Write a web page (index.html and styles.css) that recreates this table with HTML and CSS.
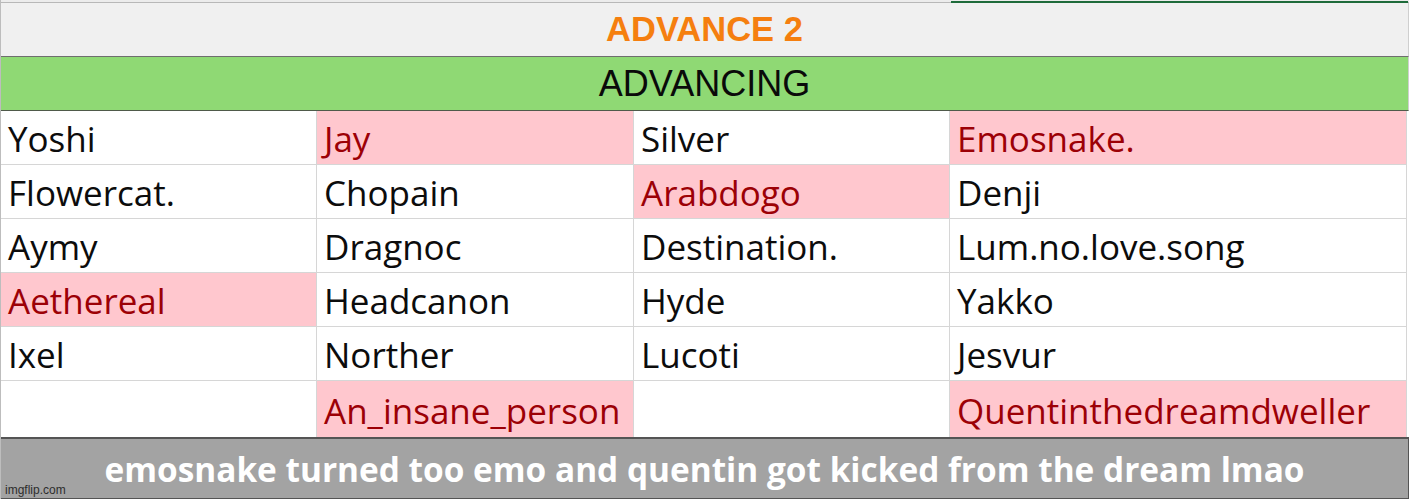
FILE: index.html
```html
<!DOCTYPE html>
<html>
<head>
<meta charset="utf-8">
<link rel="stylesheet" href="styles.css">
</head>
<body>
<div class="sheet">
  <div class="topstrip"><span class="sel"></span></div>
  <div class="title">ADVANCE 2</div>
  <div class="banner">ADVANCING</div>
  <div class="grid">
    <div class="cell">Yoshi</div>
    <div class="cell bad">Jay</div>
    <div class="cell">Silver</div>
    <div class="cell bad">Emosnake.</div>

    <div class="cell">Flowercat.</div>
    <div class="cell">Chopain</div>
    <div class="cell bad">Arabdogo</div>
    <div class="cell">Denji</div>

    <div class="cell">Aymy</div>
    <div class="cell">Dragnoc</div>
    <div class="cell">Destination.</div>
    <div class="cell">Lum.no.love.song</div>

    <div class="cell bad">Aethereal</div>
    <div class="cell">Headcanon</div>
    <div class="cell">Hyde</div>
    <div class="cell">Yakko</div>

    <div class="cell">Ixel</div>
    <div class="cell">Norther</div>
    <div class="cell">Lucoti</div>
    <div class="cell">Jesvur</div>

    <div class="cell tall"></div>
    <div class="cell tall bad">An_insane_person</div>
    <div class="cell tall"></div>
    <div class="cell tall bad">Quentinthedreamdweller</div>
  </div>
  <div class="caption">
    emosnake turned too emo and quentin got kicked from the dream lmao
    <span class="watermark">imgflip.com</span>
  </div>
</div>
</body>
</html>
```
FILE: styles.css
```css
html, body {
  margin: 0;
  padding: 0;
  background: #ffffff;
}
.sheet {
  width: 1409px;
  height: 499px;
  overflow: hidden;
  display: flex;
  flex-direction: column;
  border-left: 1px solid #bdbdbd;
  box-sizing: border-box;
}
.topstrip {
  height: 2px;
  background: #ececec;
  border-bottom: 1px solid #b8b8b8;
  position: relative;
}
.topstrip .sel {
  position: absolute;
  left: 950px;
  right: 1px;
  top: 1px;
  height: 2px;
  background: #1e6b3a;
}
.title {
  height: 53px;
  background: #f0f0f0;
  border-bottom: 1px solid #6e6e6e;
  display: flex;
  align-items: center;
  justify-content: center;
  font-family: "Liberation Sans", Arial, sans-serif;
  font-weight: bold;
  font-size: 34.5px;
  color: #f57f0f;
  border-right: 1px solid #cfcfcf;
}
.banner {
  height: 53px;
  background: #8fd974;
  border-bottom: 1px solid #4f5a4a;
  display: flex;
  align-items: center;
  justify-content: center;
  font-family: "Liberation Sans", Arial, sans-serif;
  font-size: 36px;
  color: #0a0a0a;
  border-right: 1px solid #cfcfcf;
}
.grid {
  display: grid;
  grid-template-columns: 316px 317px 316px 457px;
  grid-template-rows: repeat(5, 54px) 56px;
}
.cell {
  box-sizing: border-box;
  border-right: 1px solid #d6d6d6;
  border-bottom: 1px solid #d6d6d6;
  padding-left: 7px;
  padding-top: 2px;
  display: flex;
  align-items: center;
  font-family: "Open Sans", "Noto Sans", sans-serif;
  font-size: 35px;
  color: #0c0c0c;
  white-space: nowrap;
}
.cell.bad {
  background: #ffc7ce;
  color: #9c0006;
}
.cell.tall {
  border-bottom: none;
}
.caption {
  flex: 1;
  position: relative;
  background: #a3a3a3;
  border-top: 2px solid #545454;
  border-bottom: 1px solid #545454;
  border-right: 1px solid #545454;
  display: flex;
  align-items: center;
  justify-content: center;
  font-family: "Open Sans", "Noto Sans", sans-serif;
  font-weight: bold;
  font-size: 33.4px;
  color: #ffffff;
}
.watermark {
  position: absolute;
  left: 4px;
  bottom: 1px;
  font-family: "Liberation Sans", Arial, sans-serif;
  font-weight: normal;
  font-size: 12px;
  color: #2d2d2d;
}
```
